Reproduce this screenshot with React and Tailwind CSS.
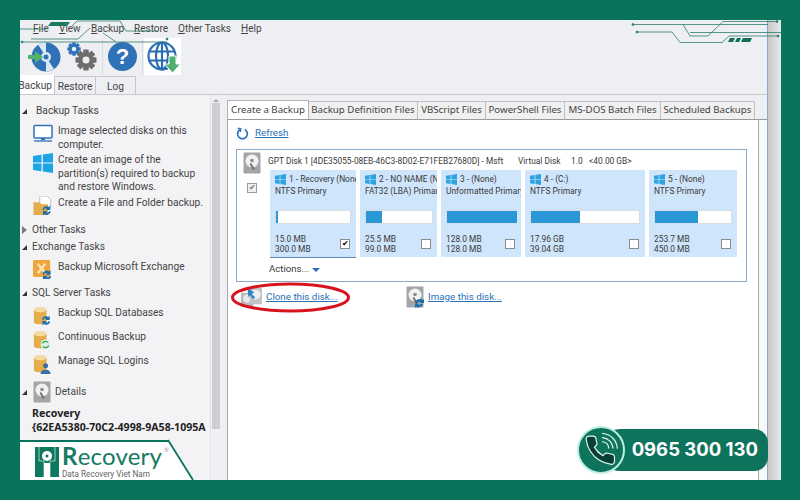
import React from 'react';

const sans = { fontFamily: 'Roboto, sans-serif' };
const noto = { fontFamily: '"Noto Sans", sans-serif' };

function Win({ className = 'w-3 h-3', fill = '#2fa3e0' }) {
  return (
    <svg viewBox="0 0 20 20" className={className}>
      <path d="M0 3 L8.5 1.8 V9.4 H0 Z M9.8 1.6 L20 0 V9.4 H9.8 Z M0 10.6 H8.5 V18.2 L0 17 Z M9.8 10.6 H20 V20 L9.8 18.4 Z" fill={fill} />
    </svg>
  );
}

function Hdd({ className = 'w-[18px] h-[22px]', badge }) {
  return (
    <svg viewBox="0 0 18 22" className={className}>
      <rect x="0.5" y="0.5" width="17" height="21" rx="1" fill="#a3a5a7" />
      <circle cx="9" cy="9" r="6.5" fill="#f2f2f2" />
      <circle cx="9" cy="8.5" r="1.8" fill="#8b8d90" />
      <path d="M8 11 L12 17 L10 18 L6.5 12 Z" fill="#6f7173" />
      {badge && <path d="M9 17 a5 5 0 0 1 8 -3 l1 -1 v4 h-4 l1 -1 a3 3 0 0 0 -4 2 Z M17 18 a5 5 0 0 1 -7 3 l-1 1 v-4 h4 l-1 1 a3 3 0 0 0 3 -1 Z" fill="#1b6ea8" />}
    </svg>
  );
}

function CloneIcon() {
  return (
    <svg viewBox="0 0 22 22" className="w-[21px] h-[21px]">
      <rect x="0" y="6" width="13" height="15" rx="1" fill="#b5b7b9" />
      <circle cx="6.500" cy="12" r="4.500" fill="#e8e8e8" />
      <rect x="9" y="1" width="13" height="17" rx="1" fill="#c2c4c6" />
      <circle cx="15.500" cy="8" r="5" fill="#f0f0f0" />
      <path d="M7 1 L14 6 L11 7 L15 11 L12.500 12.500 L9 8.500 L7.500 11 Z" fill="#2a82c9" />
    </svg>
  );
}

function Arrows() {
  return (
    <g>
      <path d="M10 15 a4.500 4.500 0 0 1 7 -3 l1.500 -1.500 v5 h-5 l1.500 -1.500 a2.500 2.500 0 0 0 -3.500 1.500 Z" fill="#1a6fb0" />
      <path d="M19 17 a4.500 4.500 0 0 1 -7 3 l-1.500 1.500 v-5 h5 l-1.500 1.500 a2.500 2.500 0 0 0 3.500 -1.500 Z" fill="#1a6fb0" />
    </g>
  );
}

function Db({ kind }) {
  return (
    <svg viewBox="0 0 20 22" className="w-[18px] h-5">
      <path d="M1 4 V18 C1 21 15 21 15 18 V4 Z" fill="#e5ac4b" />
      <ellipse cx="8" cy="4" rx="7" ry="3" fill="#f6d9a2" />
      {kind === 'arrows' && <Arrows />}
      {kind === 'sync' && <g><circle cx="14" cy="16" r="5.500" fill="#dff3e6" /><path d="M10.500 15 a3.800 3.800 0 0 1 6.500 -1 M17.500 17 a3.800 3.800 0 0 1 -6.500 1" stroke="#34a367" strokeWidth="1.500" fill="none" /></g>}
      {kind === 'user' && <g><circle cx="14" cy="13" r="2.800" fill="#3b6ea5" /><path d="M8.500 22 c0 -6 11 -6 11 0 Z" fill="#3b6ea5" /></g>}
    </svg>
  );
}

function Disc() {
  return (
    <svg viewBox="0 0 34 30" className="w-[34px] h-[30px]">
      <circle cx="18" cy="15" r="14.500" fill="#2f72b8" />
      <path d="M18 15 L10 2.500 A14.500 14.500 0 0 1 18 .5 Z M18 15 L26 27 A14.500 14.500 0 0 1 18 29.500 Z" fill="#dbe7f3" />
      <circle cx="18" cy="15" r="5" fill="#dbe7f3" />
      <circle cx="18" cy="15" r="2.500" fill="#2f72b8" />
      <path d="M0 13 H7 V9 L15 15 L7 21 V17 H0 Z" fill="#52b36b" />
    </svg>
  );
}

function Gear({ size, color, cls }) {
  const teeth = [0, 45, 90, 135];
  return (
    <svg viewBox="0 0 24 24" style={{ width: size, height: size }} className={cls}>
      {teeth.map((a) => (
        <rect key={a} x="9" y="0.500" width="6" height="23" rx="0.800" fill={color} transform={`rotate(${a} 12 12)`} />
      ))}
      <circle cx="12" cy="12" r="8.500" fill={color} />
      <circle cx="12" cy="12" r="3.800" fill="#eeeff2" />
    </svg>
  );
}

function Globe() {
  return (
    <svg viewBox="0 0 36 36" className="w-[36px] h-[36px]">
      <g fill="none" stroke="#2a6db0" strokeWidth="2.200">
        <circle cx="17" cy="17" r="13.500" />
        <ellipse cx="17" cy="17" rx="6" ry="13.500" />
        <path d="M17 3.500 V30.500 M4 12.500 H30 M4 21.500 H30" />
      </g>
      <path d="M24 17 H31 V25 H35.500 L27.500 34 L19.500 25 H24 Z" fill="#4cb071" stroke="#fff" strokeWidth="1" />
    </svg>
  );
}

function Menu({ k, rest, cls }) {
  return (
    <span className={cls}><span className="underline">{k}</span>{rest}</span>
  );
}

function TaskRow({ icon, lines, h }) {
  return (
    <div className={`flex ${h}`}>
      <div className="w-[25px] shrink-0">{icon}</div>
      <div className="leading-[13.500px] whitespace-nowrap">{lines.map((l) => <div key={l}>{l}</div>)}</div>
    </div>
  );
}

const Caret = () => <span className="w-0 h-0 border-l-[5px] border-l-transparent border-b-[5px] border-b-[#333]" />;

function Head({ label, cls = '', open = true }) {
  return (
    <div className={`flex items-center h-[14px] ${cls}`}>
      <span className="w-[12px] flex">
        {open ? <Caret /> : <span className="w-0 h-0 border-y-[4px] border-y-transparent border-l-[5px] border-l-[#777]" />}
      </span>
      <span>{label}</span>
    </div>
  );
}

function Partition({ w, title, type, used, a, checked, selected, barW, fillW }) {
  return (
    <div className={`bg-[#cfe5fb] shrink-0 pt-[3px] pl-[5px] relative ${selected ? 'border-b border-b-[#5a87b5] h-[88px]' : 'h-[87px]'}`} style={{ width: w }}>
      <div className="flex items-center gap-[3px] whitespace-nowrap overflow-hidden h-[12px]">
        <Win className="w-[11px] h-[11px] shrink-0" />
        <span>{title}</span>
      </div>
      <div className="whitespace-nowrap overflow-hidden h-[13px]">{type}</div>
      <div className="h-[14px] bg-white border border-[#d5dde5] mt-[12px]" style={{ width: barW }}>
        <div className="h-full bg-[#2a98d6]" style={{ width: fillW }} />
      </div>
      <div className="flex justify-between items-center mt-[10px] pr-[6px]">
        <div className="leading-[10px]">
          <div>{used}</div>
          <div>{a}</div>
        </div>
        <span className="w-[10px] h-[10px] border border-[#8c8c8c] bg-white flex items-center justify-center text-[8px] leading-none text-black">
          {checked ? '✔' : ''}
        </span>
      </div>
    </div>
  );
}

export default function App() {
  return (
    <div className="relative w-[800px] h-[500px] bg-[#08735b] overflow-hidden text-[#333] pt-5 pl-5" style={sans}>
      <div className="w-[761px] h-[460px] flex bg-[#eeeff2] overflow-hidden">
        <div className="w-[747px] shrink-0 flex flex-col">
          {/* menu */}
          <div className="h-5 flex items-center text-[10px] text-[#444] shrink-0 pb-[6px] pt-[2px]">
            <Menu k="F" rest="ile" cls="ml-[13px] w-[26px]" />
            <Menu k="V" rest="iew" cls="w-[32px]" />
            <Menu k="B" rest="ackup" cls="w-[43px]" />
            <Menu k="R" rest="estore" cls="w-[44px]" />
            <Menu k="O" rest="ther Tasks" cls="w-[63px]" />
            <Menu k="H" rest="elp" />
          </div>
          {/* toolbar */}
          <div className="h-[35px] flex items-start shrink-0">
            <span className="ml-[8px] mt-[2px]"><Disc /></span>
            <span className="relative ml-[5px] w-[31px] h-[32px] mt-[1px]">
              <Gear size={14} color="#2f72b8" cls="absolute left-0 top-[1px]" />
              <Gear size={22} color="#6e6e6e" cls="absolute left-[8px] top-[8px]" />
            </span>
            <span className="w-px h-[35px] bg-[#dcdde0] ml-[4px]" />
            <span className="ml-[5px] mt-[2px] w-[29px] h-[29px] rounded-full bg-[#2f72b8] text-white font-bold text-[22px] leading-[29px] text-center" style={{ fontFamily: '"Liberation Sans", sans-serif' }}>?</span>
            <span className="w-px h-[35px] bg-[#dcdde0] ml-[5px]" />
            <span className="ml-[1px] -mt-[2px] w-[37px] h-[37px] bg-white flex items-center justify-center"><Globe /></span>
          </div>
          {/* main tabs */}
          <div className="h-[20px] flex items-end border-b border-[#c8c8c8] text-[10.200px] shrink-0 text-[#444] overflow-hidden">
            <span className="w-[34px] h-[19px] bg-white flex items-center justify-end pr-[2px] pt-[3px] overflow-hidden whitespace-nowrap">Backup</span>
            <span className="w-[42px] h-[18px] border border-[#c8c8c8] border-b-0 flex items-center justify-center pt-[2px]">Restore</span>
            <span className="w-[40px] h-[18px] border border-[#c8c8c8] border-b-0 border-l-0 flex items-center justify-center pt-[2px]">Log</span>
          </div>
          {/* body */}
          <div className="flex-1 flex min-h-0">
            {/* left panel */}
            <div className="w-[190px] shrink-0 bg-[#f3f3f5] pl-[2px] pt-[9px] text-[10.200px] text-[#444] overflow-hidden">
              <Head label="Backup Tasks" cls="[&>span:last-child]:ml-[2px]" />
              <div className="pl-[11px] pt-[6px]">
                <TaskRow h="h-[29px]" lines={['Image selected disks on this', 'computer.']} icon={
                  <svg viewBox="0 0 20 20" className="w-5 h-5">
                    <rect x="1" y="1.500" width="18" height="12.500" rx="1" fill="#fff" stroke="#2f72b8" strokeWidth="1.500" />
                    <path d="M8 14 h4 v2 h-4 Z" fill="#2f72b8" />
                    <rect x="1" y="16" width="18" height="2" fill="#6e9ccc" />
                  </svg>
                } />
                <TaskRow h="h-[43px]" lines={['Create an image of the', 'partition(s) required to backup', 'and restore Windows.']} icon={<Win className="w-5 h-5" fill="#1ca5e6" />} />
                <TaskRow h="h-[20px]" lines={['Create a File and Folder backup.']} icon={
                  <svg viewBox="0 0 20 22" className="w-[19px] h-5">
                    <path d="M7 0 H15 L19 4 V14 H7 Z" fill="#fff" stroke="#bbb" />
                    <path d="M0 7 H7 L9 9 H16 V21 H0 Z" fill="#e5ac4b" />
                    <Arrows />
                  </svg>
                } />
              </div>
              <Head label="Other Tasks" cls="mt-[7px] [&>span:first-child]:w-[10px]" open={false} />
              <Head label="Exchange Tasks" cls="mt-[3px] [&>span:first-child]:w-[10px]" />
              <div className="pl-[11px] pt-[6px] h-[32px]">
                <TaskRow h="h-[20px]" lines={['Backup Microsoft Exchange']} icon={
                  <svg viewBox="0 0 20 20" className="w-[19px] h-[19px]">
                    <rect width="18" height="18" rx="1.500" fill="#f0a63a" />
                    <path d="M5 4 L13 14 M13 4 L5 14" stroke="#fbe3b8" strokeWidth="2.500" />
                    <Arrows />
                  </svg>
                } />
              </div>
              <Head label="SQL Server Tasks" cls="[&>span:first-child]:w-[10px]" />
              <div className="pl-[11px] pt-[6px]">
                <TaskRow h="h-[24px]" lines={['Backup SQL Databases']} icon={<Db kind="arrows" />} />
                <TaskRow h="h-[24px]" lines={['Continuous Backup']} icon={<Db kind="sync" />} />
                <TaskRow h="h-[27px]" lines={['Manage SQL Logins']} icon={<Db kind="user" />} />
              </div>
              <div className="flex items-center h-[22px]">
                <span className="w-[11px] flex"><Caret /></span>
                <Hdd />
                <span className="ml-[4px]">Details</span>
              </div>
              <div className="font-bold text-[#222] leading-[14px] text-[10.600px] pl-[10px] mt-[3px] whitespace-nowrap overflow-hidden" style={noto}>
                <div>Recovery</div>
                <div>{'{62EA5380-70C2-4998-9A58-1095A'}</div>
              </div>
            </div>
            {/* scrollbar */}
            <div className="w-[10px] shrink-0 bg-[#f0f0f2] border-l border-[#e3e3e5] flex flex-col items-center pt-[4px]">
              <span className="w-0 h-0 border-x-[3px] border-x-transparent border-b-[3px] border-b-[#aaa]" />
              <span className="mt-[1px] w-[8px] h-[326px] bg-[#cfcfd2]" />
            </div>
            {/* right panel */}
            <div className="flex-1 bg-[#eeeff2] pl-[7px] pt-[5px] flex flex-col min-w-0">
              <div className="flex items-end h-[19px] text-[9.700px] text-[#444] shrink-0" style={noto}>
                <span className="w-[82px] h-[19px] bg-white border border-[#b4b4b4] border-b-0 flex items-center justify-center whitespace-nowrap">Create a Backup</span>
                {[
                  ['w-[109px]', 'Backup Definition Files'],
                  ['w-[68px]', 'VBScript Files'],
                  ['w-[79px]', 'PowerShell Files'],
                  ['w-[96px]', 'MS-DOS Batch Files'],
                  ['w-[94px]', 'Scheduled Backups'],
                ].map(([w, t]) => (
                  <span key={t} className={`${w} h-[18px] bg-[#f0f0f0] border-r border-t border-[#c0c0c0] flex items-center justify-center whitespace-nowrap`}>{t}</span>
                ))}
              </div>
              <div className="flex-1 flex bg-white border-t border-[#9a9a9a]">
                <div className="w-[532px] border-x border-[#a9a9a9] bg-white shrink-0 pl-[8px] pt-[7px]">
                  <div className="flex items-center h-[13px] gap-[6px] text-[9.800px] text-[#2a70b9]">
                    <svg viewBox="0 0 14 14" className="w-[13px] h-[13px]" fill="none" stroke="#2a70b9" strokeWidth="1.800">
                      <path d="M4.500 2.800 A5.300 5.300 0 1 0 9.500 2.800" />
                      <path d="M1.800 1.200 L5.200 1.800 L4.800 5.400" strokeWidth="1.400" />
                    </svg>
                    <span className="underline">Refresh</span>
                  </div>
                  {/* disk box */}
                  <div className="w-[511px] h-[133px] mt-[9px] border border-[#8aa9cc] text-[8.400px] text-[#3a3a3a] pl-[6px] pt-[2px]">
                    <div className="flex h-[18px]">
                      <Hdd />
                      <span className="ml-[7px] mt-[3px] whitespace-nowrap w-[250px]">GPT Disk 1 [4DE35055-08EB-46C3-8D02-E71FEB27680D] - Msft</span>
                      <span className="mt-[3px] w-[53px] whitespace-nowrap">Virtual Disk</span>
                      <span className="mt-[3px] w-[18px]">1.0</span>
                      <span className="mt-[3px] whitespace-nowrap">{'<40.00 GB>'}</span>
                    </div>
                    <div className="flex">
                      <div className="w-[27px] shrink-0 pt-[13px] pl-[4px]">
                        <span className="w-[10px] h-[10px] border border-[#9a9a9a] bg-[#f0f0f0] flex items-center justify-center text-[8px] leading-none text-[#777]">✔</span>
                      </div>
                      <div className="flex gap-[4px]">
                        <Partition w={86} title="1 - Recovery (None)" type="NTFS Primary" used="15.0 MB" a="300.0 MB" checked selected barW={76} fillW={2} />
                        <Partition w={77} title="2 - NO NAME (None)" type="FAT32 (LBA) Primary" used="25.5 MB" a="99.0 MB" barW={68} fillW={16} />
                        <Partition w={80} title="3 -  (None)" type="Unformatted Primary" used="128.0 MB" a="128.0 MB" barW={70} fillW={70} />
                        <Partition w={120} title="4 -  (C:)" type="NTFS Primary" used="17.96 GB" a="39.04 GB" barW={110} fillW={49} />
                        <Partition w={88} title="5 -  (None)" type="NTFS Primary" used="253.7 MB" a="450.0 MB" barW={78} fillW={43} />
                      </div>
                    </div>
                    <div className="ml-[26px] mt-[4px] text-[9.600px] flex items-center gap-[3px]">
                      Actions...
                      <span className="w-0 h-0 mt-[2px] border-x-[4px] border-x-transparent border-t-[4px] border-t-[#2a70b9]" />
                    </div>
                  </div>
                  {/* links */}
                  <div className="flex items-center h-[22px] mt-[4px] text-[9.800px] text-[#2a70b9]">
                    <span className="ml-[5px] flex"><CloneIcon /></span>
                    <span className="ml-[4px] underline w-[140px] whitespace-nowrap">Clone this disk...</span>
                    <Hdd badge />
                    <span className="ml-[4px] underline whitespace-nowrap">Image this disk...</span>
                  </div>
                </div>
                <div className="flex-1 bg-[#f7f8f9]" />
              </div>
            </div>
          </div>
        </div>
        {/* blue line + grey strip */}
        <div className="flex-1 border-l border-[#8aa9cc] bg-gradient-to-r from-[#c9c9c9] to-[#e8e8e8]" />
      </div>

      {/* red ellipse */}
      <svg className="absolute left-[230px] top-[281px] w-[122px] h-[32px]" viewBox="0 0 122 32" fill="none">
        <ellipse cx="60.500" cy="16.500" rx="58" ry="13.500" stroke="#d8131e" strokeWidth="3" />
      </svg>

      {/* decorative circuit lines */}
      <svg className="absolute left-0 top-0 w-[800px] h-[60px]" viewBox="0 0 800 60" fill="none" stroke="#2c7d6b" strokeWidth="0.800">
        <path d="M20 29 H47 M72 26 L77 21 H120 L126 31 H157 M31 39 H78 L90 28 M103 33 L116 42 M22 42 H167" />
        <circle cx="22" cy="42" r="1" fill="#2c7d6b" />
        <circle cx="167" cy="39" r="1" fill="#2c7d6b" />
        <path d="M48 26 L51 22 H70 L67 26 Z" fill="#1c7a63" stroke="none" />
        <path d="M633 24.500 H683 L690 36 H708 L723 21.500 H777 M683 24.500 H768 M690 32.500 H781 M637 32 H672 L680 42.500 H722 L729 36 H778" />
        <circle cx="633" cy="24.500" r="1" fill="#2c7d6b" />
        <circle cx="777" cy="21.500" r="1" fill="#2c7d6b" />
        <circle cx="637" cy="32" r="1" fill="#2c7d6b" />
        <circle cx="778" cy="36" r="1" fill="#2c7d6b" />
        <path d="M730 38 H735 L733 42 H728 Z M737 38 H741 L739 42 H735 Z M743 38 H752 L750 42 H741 Z" fill="#0e6f5a" stroke="none" />
      </svg>

      {/* logo */}
      <div className="absolute left-5 top-[440px] w-[174px] h-[40px] bg-white [clip-path:polygon(0_0,148px_0,174px_40px,0_40px)]">
        <div className="h-[2px] bg-[#08735b]" />
        <div className="flex pl-[15px] pt-[5px]">
          <svg viewBox="0 0 24 30" className="w-6 h-[30px]">
            <rect width="24" height="30" fill="#0d7a5f" />
            <circle cx="12" cy="9" r="5" fill="#fff" />
            <circle cx="12" cy="9" r="1.500" fill="#0d7a5f" />
            <path d="M4 0 V14 H9 V30 H15 V14 H20 V0" fill="none" stroke="#fff" strokeWidth="0.600" />
            <rect x="9" y="16" width="6" height="14" fill="#fff" />
          </svg>
          <div className="ml-[3px] -mt-[1px]">
            <div className="flex items-start text-[#147a62] text-[24px] leading-[20px] tracking-[0.200px]" style={{ fontFamily: 'Lato, sans-serif' }}>
              <span className="font-bold">R</span>ecovery<span className="text-[6px] leading-[8px] text-[#999] ml-[2px]">®</span>
            </div>
            <div className="text-[8.200px] leading-[9px] text-[#666] whitespace-nowrap mt-[4px]">Data Recovery Viet Nam</div>
          </div>
        </div>
      </div>
      <svg className="absolute left-[165px] top-[438px] w-[32px] h-[44px]" viewBox="0 0 32 44" fill="none">
        <path d="M3 2 L28 42" stroke="#08735b" strokeWidth="1.800" />
      </svg>

      {/* phone badge */}
      <div className="absolute left-[600px] top-[429px] w-[168px] h-[42px] rounded-[14px] rounded-l-[20px] bg-[#0d735c] flex items-center justify-end pr-[10px] text-white font-bold text-[18.500px]" style={{ fontFamily: 'Inter, sans-serif' }}>
        0965 300 130
      </div>
      <div className="absolute left-[577px] top-[426px] w-[48px] h-[48px] rounded-full bg-[#0d735c] border-2 border-[#bdeee2] flex items-center justify-center">
        <svg viewBox="0 0 24 24" className="w-[36px] h-[36px]" fill="none" stroke="#e6f7f2" strokeWidth="0.800" strokeLinecap="round" strokeLinejoin="round">
          <path d="M21 16.900v2.800a1.900 1.900 0 0 1-2.100 1.900 18.800 18.800 0 0 1-8.200-2.900 18.500 18.500 0 0 1-5.700-5.700 18.800 18.800 0 0 1-2.900-8.200A1.900 1.900 0 0 1 3.900 2.700h2.800a1.900 1.900 0 0 1 1.900 1.600c.1.900.3 1.800.6 2.600a1.900 1.900 0 0 1-.4 2L7.600 10.100a15 15 0 0 0 5.700 5.700l1.200-1.200a1.900 1.900 0 0 1 2-.4c.8.300 1.700.5 2.600.6a1.900 1.900 0 0 1 1.900 2.100Z" fill="#0a3f35" />
          <path d="M13 6.500a4.800 4.800 0 0 1 4.200 4.200M13 3.700a7.600 7.600 0 0 1 7 7M13 1a10.400 10.400 0 0 1 9.800 9.800" />
        </svg>
      </div>
    </div>
  );
}
